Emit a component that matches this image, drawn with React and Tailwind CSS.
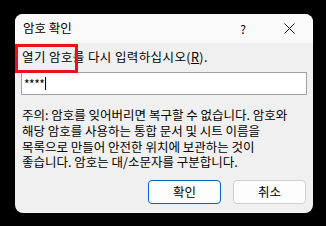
import React from "react";

const font = { fontFamily: '"Malgun Gothic", "Noto Sans CJK KR", "Noto Sans", sans-serif' };

export default function App() {
  return (
    <div className="w-[326px] h-[226px] bg-black pt-[14px] pl-[15px]" style={font}>
      <div className="relative w-[298px] h-[199px] rounded-[8px] bg-[#f0f0f0] overflow-hidden flex flex-col text-black">
        {/* title bar */}
        <div className="h-[29px] bg-[#fafafa] flex items-center pl-[8px] shrink-0">
          <span className="text-[12.5px] leading-none">암호 확인</span>
          <span className="ml-auto text-[12px] leading-none w-[10px] text-center mr-[36px]">?</span>
          <svg width="11" height="11" viewBox="0 0 11 11" className="mr-[18px]">
            <path d="M0.5 0.5 L10.5 10.5 M10.5 0.5 L0.5 10.5" stroke="#1a1a1a" strokeWidth="1" fill="none" />
          </svg>
        </div>
        {/* body */}
        <div className="flex flex-col pl-[7px] pr-[6px]">
          <div className="h-[29px] flex items-center text-[12.5px] leading-none tracking-[0.4px]">
            <span>열기 암호를 다시 입력하십시오(<span className="underline">R</span>).</span>
          </div>
          <div className="-ml-[1px] w-[286px] h-[23px] bg-white border border-[#a0a0a0] flex items-center pl-[2px]">
            <span className="text-[12px] leading-none tracking-[-0.5px]">****</span>
            <span className="w-[1px] h-[13px] bg-black ml-[1px]"></span>
          </div>
          <p className="mt-[12px] text-[12.5px] leading-[15.8px]">
            주의: 암호를 잊어버리면 복구할 수 없습니다. 암호와<br />
            해당 암호를 사용하는 통합 문서 및 시트 이름을<br />
            목록으로 만들어 안전한 위치에 보관하는 것이<br />
            좋습니다. 암호는 대/소문자를 구분합니다.
          </p>
        </div>
        <div className="mt-auto mb-[9px] flex justify-end gap-[12px] pr-[7px]">
          <button className="w-[73px] h-[24px] bg-[#fdfdfd] border border-[#0067c0] rounded-[4px] text-[12.5px] leading-none">확인</button>
          <button className="w-[73px] h-[24px] bg-[#fdfdfd] border border-[#d0d0d0] rounded-[4px] text-[12.5px] leading-none">취소</button>
        </div>
        {/* red annotation */}
        <div className="absolute left-0 top-[30px] w-[63px] h-[29px] border-[3px] border-[#e81123]"></div>
      </div>
    </div>
  );
}
